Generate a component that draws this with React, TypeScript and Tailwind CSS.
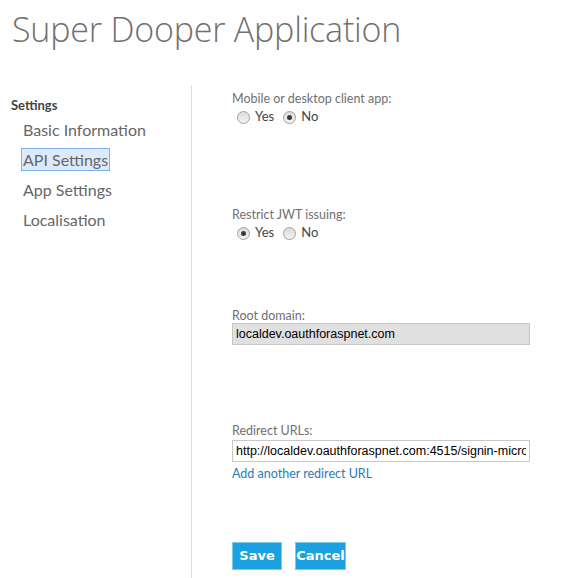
import React, { useState } from 'react';

const font = { fontFamily: 'Lato, "Open Sans", "Liberation Sans", sans-serif' };
const arial = { fontFamily: '"Liberation Sans", Arial, sans-serif' };
const btnFont = { fontFamily: '"DejaVu Sans", Verdana, sans-serif' };

const Radio = ({ checked, label, onClick }: { checked: boolean; label: string; onClick: () => void }) => (
  <label className="flex items-center gap-[5px] cursor-pointer" onClick={onClick}>
    <span className="w-[13px] h-[13px] rounded-full border border-[#a0a0a0] bg-gradient-to-b from-[#dcdcdc] to-[#f4f4f4] flex items-center justify-center">
      {checked && <span className="w-[5px] h-[5px] rounded-full bg-[#3a3a3a]" />}
    </span>
    <span className="text-[13px] text-[#444]">{label}</span>
  </label>
);

const App: React.FC = () => {
  const [client, setClient] = useState(false);
  const [jwt, setJwt] = useState(true);
  const menu = ['Basic Information', 'API Settings', 'App Settings', 'Localisation'];

  return (
    <div className="w-[561px] h-[578px] bg-white overflow-hidden" style={font}>
      <h1
        className="pl-[12px] pt-[4px] h-[85px] text-[34px] font-light text-[#707070] tracking-[-0.2px]"
        style={{ fontFamily: '"Open Sans", sans-serif' }}
      >
        Super Dooper Application
      </h1>
      <div className="flex">
        <div className="w-[191px] pl-[11px] pt-[11px]">
          <div className="text-[13px] font-bold text-[#444] leading-[18px]">Settings</div>
          <ul className="pl-[10px]">
            {menu.map((m) => (
              <li key={m} className="h-[30px] flex items-center">
                <span
                  className={`text-[16px] text-[#666] leading-[21px] px-[1px] border ${
                    m === 'API Settings' ? 'bg-[#dceafc] border-[#7fb2ea]' : 'border-transparent'
                  }`}
                >
                  {m}
                </span>
              </li>
            ))}
          </ul>
        </div>
        <div className="w-[1px] h-[493px] bg-[#dcdcdc]" />
        <div className="pl-[40px] pt-[6px] flex-1">
          <div className="h-[116px]">
            <div className="text-[12.5px] text-[#707070] leading-[16px]">Mobile or desktop client app:</div>
            <div className="flex gap-[9px] pl-[5px] h-[20px]">
              <Radio checked={client} label="Yes" onClick={() => setClient(true)} />
              <Radio checked={!client} label="No" onClick={() => setClient(false)} />
            </div>
          </div>
          <div className="h-[101px]">
            <div className="text-[12.5px] text-[#707070] leading-[16px]">Restrict JWT issuing:</div>
            <div className="flex gap-[9px] pl-[5px] h-[20px]">
              <Radio checked={jwt} label="Yes" onClick={() => setJwt(true)} />
              <Radio checked={!jwt} label="No" onClick={() => setJwt(false)} />
            </div>
          </div>
          <div className="h-[115px]">
            <div className="text-[12.5px] text-[#707070] leading-[16px]">Root domain:</div>
            <div
              className="-mt-[1px] w-[298px] h-[22px] bg-[#e0e0e0] border border-[#c8c8c8] px-[3px] text-[12.5px] text-black leading-[20px]"
              style={arial}
            >
              localdev.oauthforaspnet.com
            </div>
          </div>
          <div className="h-[119px]">
            <div className="text-[12.5px] text-[#707070] leading-[16px]">Redirect URLs:</div>
            <input
              className="mt-[1px] block w-[298px] h-[22px] bg-white border border-[#c8c8c8] px-[3px] text-[12.5px] text-black outline-none"
              style={arial}
              defaultValue="http://localdev.oauthforaspnet.com:4515/signin-microsoft"
            />
            <a className="block mt-[3px] text-[12.5px] text-[#2b7bb0] leading-[18px] cursor-pointer">Add another redirect URL</a>
          </div>
          <div className="flex gap-[13px]">
            <button
              className="w-[50px] h-[28px] bg-[#1ba1e2] border border-[#7ccbef] text-white text-[13px] font-bold"
              style={btnFont}
            >
              Save
            </button>
            <button
              className="w-[51px] h-[28px] bg-[#1ba1e2] border border-[#7ccbef] text-white text-[13px] font-bold"
              style={btnFont}
            >
              Cancel
            </button>
          </div>
        </div>
      </div>
    </div>
  );
};

export default App;
